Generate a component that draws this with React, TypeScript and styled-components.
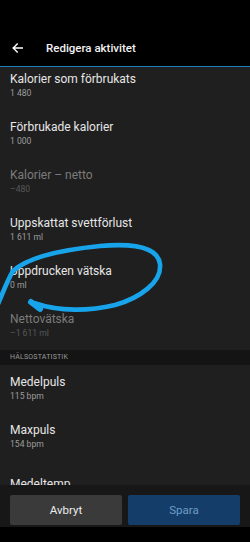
import styled, { createGlobalStyle } from "styled-components";

const GlobalStyle = createGlobalStyle`
  html, body {
    margin: 0;
    padding: 0;
    background: #000;
  }
  body {
    font-family: Roboto, "Noto Sans", sans-serif;
    -webkit-font-smoothing: antialiased;
  }
`;

const Screen = styled.div`
  position: relative;
  width: 250px;
  height: 542px;
  display: flex;
  flex-direction: column;
  background: #000;
  overflow: hidden;
`;

const Header = styled.header`
  height: 67px;
  flex-shrink: 0;
  display: flex;
  align-items: flex-end;
  padding-bottom: 10px;
  box-sizing: border-box;
  border-bottom: 1.5px solid #1a7fb6;
  background: #000;
`;

const HeaderRow = styled.div`
  display: flex;
  align-items: center;
  height: 16px;
`;

const BackButton = styled.button`
  width: 46px;
  height: 16px;
  padding: 0 0 0 12px;
  border: none;
  background: none;
  display: flex;
  align-items: center;
  color: #fff;
`;

const Title = styled.h1`
  margin: 0;
  font-size: 11.5px;
  font-weight: 500;
  color: #f2f2f2;
`;

const ScrollArea = styled.div`
  flex: 1;
  overflow: hidden;
  background: #1f1f1f;
`;

const List = styled.div`
  margin-top: -5.5px;
  display: flex;
  flex-direction: column;
`;

const Row = styled.div`
  height: 48px;
  padding: 0 10px;
  display: flex;
  flex-direction: column;
  justify-content: center;
  gap: 2px;
  box-sizing: border-box;
`;

const RowLabel = styled.div<{ $dim?: boolean }>`
  font-size: 12px;
  line-height: 14px;
  color: ${(p) => (p.$dim ? "#7b7b7b" : "#e6e6e6")};
`;

const RowValue = styled.div<{ $dim?: boolean }>`
  font-size: 8.6px;
  line-height: 11px;
  color: ${(p) => (p.$dim ? "#585858" : "#9d9d9d")};
`;

const SectionHeader = styled.div`
  height: 15px;
  padding: 0 10px;
  display: flex;
  align-items: center;
  background: #141414;
  font-size: 7px;
  letter-spacing: 0.2px;
  color: #9a9a9a;
`;

const Footer = styled.footer`
  flex-shrink: 0;
  height: 42px;
  padding: 10px 10px 2px;
  box-sizing: border-box;
  display: grid;
  grid-template-columns: 1fr 1fr;
  gap: 6px;
  background: #171717;
  margin-bottom: 15px;
`;

const FooterButton = styled.button<{ $primary?: boolean }>`
  border: none;
  border-radius: 2px;
  font-family: Roboto, "Noto Sans", sans-serif;
  font-size: 11.5px;
  background: ${(p) => (p.$primary ? "#143e69" : "#3a3a3a")};
  color: ${(p) => (p.$primary ? "#6f9bc7" : "#ececec")};
  height: 30px;
`;

const Annotation = styled.svg`
  position: absolute;
  left: 0;
  top: 0;
  pointer-events: none;
`;

type Item = { label: string; value: string; dim?: boolean };

const activity: Item[] = [
  { label: "Kalorier som förbrukats", value: "1 480" },
  { label: "Förbrukade kalorier", value: "1 000" },
  { label: "Kalorier – netto", value: "–480", dim: true },
  { label: "Uppskattat svettförlust", value: "1 611 ml" },
  { label: "Uppdrucken vätska", value: "0 ml" },
  { label: "Nettovätska", value: "–1 611 ml", dim: true },
];

const health: Item[] = [
  { label: "Medelpuls", value: "115 bpm" },
  { label: "Maxpuls", value: "154 bpm" },
  { label: "Medeltemp", value: "" },
];

function StatRow({ item }: { item: Item }) {
  return (
    <Row>
      <RowLabel $dim={item.dim}>{item.label}</RowLabel>
      <RowValue $dim={item.dim}>{item.value}</RowValue>
    </Row>
  );
}

function App() {
  return (
    <Screen>
      <GlobalStyle />
      <Header>
        <HeaderRow>
          <BackButton aria-label="Tillbaka">
            <svg width="11" height="10" viewBox="0 0 11 10" fill="none">
              <path
                d="M10.5 5H1.2M5.2 1L1.2 5l4 4"
                stroke="#fff"
                strokeWidth="1.4"
                strokeLinecap="square"
              />
            </svg>
          </BackButton>
          <Title>Redigera aktivitet</Title>
        </HeaderRow>
      </Header>
      <ScrollArea>
        <List>
          {activity.map((item) => (
            <StatRow key={item.label} item={item} />
          ))}
          <SectionHeader>HÄLSOSTATISTIK</SectionHeader>
          {health.map((item) => (
            <StatRow key={item.label} item={item} />
          ))}
        </List>
      </ScrollArea>
      <Footer>
        <FooterButton>Avbryt</FooterButton>
        <FooterButton $primary>Spara</FooterButton>
      </Footer>
      <Annotation width="250" height="542" viewBox="0 0 250 542">
        <path
          d="M-2 304 C4 290 8 279 13 271 C27 258 60 250 100 246 C135 243 158 248 160 264 C162 282 140 298 115 305 C90 311 60 312 34 303"
          stroke="#18a4ea"
          strokeWidth="4.6"
          strokeLinecap="round"
          fill="none"
        />
        <path
          d="M31 302 L40 309"
          stroke="#18a4ea"
          strokeWidth="6"
          strokeLinecap="round"
        />
      </Annotation>
    </Screen>
  );
}

export default App;
